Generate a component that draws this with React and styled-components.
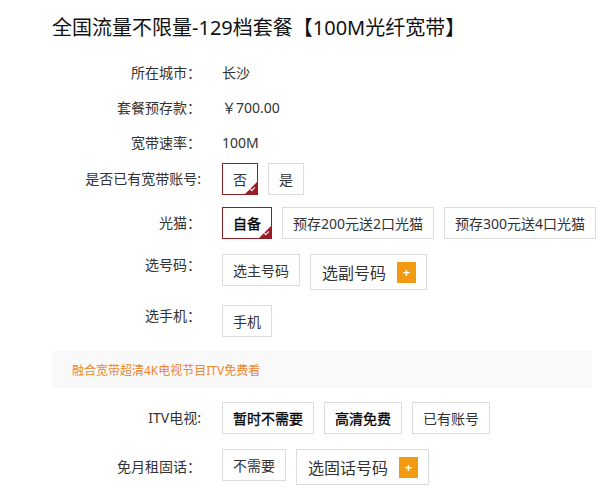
import React from "react";
import styled, { createGlobalStyle, css } from "styled-components";

const GlobalStyle = createGlobalStyle`
  * {
    box-sizing: border-box;
  }
  body {
    margin: 0;
    background: #fff;
    font-family: "Noto Sans", "Noto Sans CJK SC", sans-serif;
    color: #333;
  }
`;

const Page = styled.div`
  width: 607px;
  padding: 14px 15px 10px 52px;
  display: flex;
  flex-direction: column;
`;

const Title = styled.h1`
  margin: 0;
  font-size: 20px;
  line-height: 28px;
  font-weight: 400;
  color: #111;
  white-space: nowrap;
`;

const Info = styled.div`
  display: flex;
  flex-direction: column;
  margin-top: 13px;
`;

const Row = styled.div`
  display: flex;
  align-items: ${(p) => (p.$top ? "flex-start" : "center")};
  gap: 21px;
  margin-top: ${(p) => p.$space || 0}px;
  min-height: ${(p) => (p.$info ? "35px" : "auto")};
`;

const Label = styled.div`
  width: 149px;
  flex-shrink: 0;
  text-align: right;
  font-size: 14px;
  line-height: ${(p) => (p.$top ? "22px" : "20px")};
  color: #333;
  white-space: nowrap;
`;

const Value = styled.div`
  font-size: 14px;
  line-height: 20px;
  color: #333;
`;

const Options = styled.div`
  display: flex;
  align-items: flex-start;
  gap: 10px;
`;

const Option = styled.div`
  position: relative;
  height: ${(p) => (p.$plus ? "36px" : "32px")};
  padding: 0 10px 0 ${(p) => (p.$plus ? "11px" : "10px")};
  display: flex;
  align-items: center;
  gap: 11px;
  border: 1px solid #dcdcdc;
  background: #fff;
  font-size: ${(p) => (p.$plus ? "16px" : "14px")};
  color: ${(p) => (p.$strong ? "#000" : "#333")};
  -webkit-text-stroke: ${(p) => (p.$strong ? "0.3px #000" : "0")};
  white-space: nowrap;

  ${(p) =>
    p.$active &&
    css`
      border-color: #8e1d24;

      &::after {
        content: "";
        position: absolute;
        right: 0;
        bottom: 0;
        width: 0;
        height: 0;
        border-style: solid;
        border-width: 0 0 12px 12px;
        border-color: transparent transparent #9c1c26 transparent;
      }

      &::before {
        content: "";
        position: absolute;
        right: 2px;
        bottom: 4px;
        width: 4px;
        height: 2px;
        border-left: 1px solid #fff;
        border-bottom: 1px solid #fff;
        transform: rotate(-45deg);
        z-index: 1;
      }
    `}
`;

const Plus = styled.span`
  width: 19px;
  height: 21px;
  background: #f39a13;
  color: #fff;
  font-size: 13px;
  font-weight: 700;
  line-height: 21px;
  text-align: center;
  -webkit-text-stroke: 0;
`;

const Banner = styled.div`
  margin-top: 14px;
  height: 37px;
  padding-left: 20px;
  display: flex;
  align-items: center;
  background: #f9f9fa;
  font-size: 12px;
  color: #f0852c;
`;

const OptionRow = ({ label, space, top, children }) => (
  <Row $space={space} $top={top}>
    <Label $top={top}>{label}</Label>
    <Options>{children}</Options>
  </Row>
);

export default function App() {
  return (
    <Page>
      <GlobalStyle />
      <Title>全国流量不限量-129档套餐【100M光纤宽带】</Title>

      <Info>
        <Row $info>
          <Label>所在城市：</Label>
          <Value>长沙</Value>
        </Row>
        <Row $info>
          <Label>套餐预存款：</Label>
          <Value>￥700.00</Value>
        </Row>
        <Row $info>
          <Label>宽带速率：</Label>
          <Value>100M</Value>
        </Row>
      </Info>

      <OptionRow label="是否已有宽带账号:" space={3}>
        <Option $active>否</Option>
        <Option>是</Option>
      </OptionRow>

      <OptionRow label="光猫：" space={12}>
        <Option $active $strong>自备</Option>
        <Option>预存200元送2口光猫</Option>
        <Option>预存300元送4口光猫</Option>
      </OptionRow>

      <OptionRow label="选号码：" space={15} top>
        <Option>选主号码</Option>
        <Option $plus>
          选副号码
          <Plus>+</Plus>
        </Option>
      </OptionRow>

      <OptionRow label="选手机：" space={15} top>
        <Option>手机</Option>
      </OptionRow>

      <Banner>融合宽带超清4K电视节目ITV免费看</Banner>

      <OptionRow label="ITV电视:" space={14}>
        <Option $strong>暂时不需要</Option>
        <Option $strong>高清免费</Option>
        <Option>已有账号</Option>
      </OptionRow>

      <OptionRow label="免月租固话：" space={15}>
        <Option>不需要</Option>
        <Option $plus>
          选固话号码
          <Plus>+</Plus>
        </Option>
      </OptionRow>
    </Page>
  );
}
